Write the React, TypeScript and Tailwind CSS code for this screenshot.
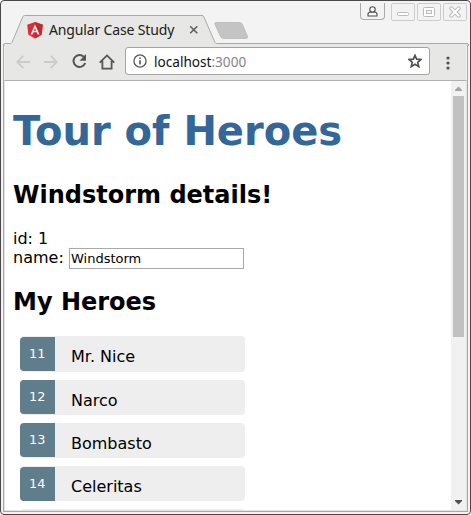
import React from 'react';

const heroes = [
  { id: 11, name: 'Mr. Nice' },
  { id: 12, name: 'Narco' },
  { id: 13, name: 'Bombasto' },
  { id: 14, name: 'Celeritas' },
];

function AngularLogo() {
  return (
    <svg width="16" height="17" viewBox="0 0 16 17" className="shrink-0">
      <path d="M8 0 L15.8 2.8 L14.6 12.8 L8 16.6 L1.4 12.8 L0.2 2.8 Z" fill="#dd2c35" />
      <path d="M8 0 L15.8 2.8 L14.6 12.8 L8 16.6 Z" fill="#bd2a33" />
      <path d="M8 2.6 L3.5 12.5 H5.4 L6.3 10.3 H9.7 L10.6 12.5 H12.5 Z M8 6 L9.1 8.8 H6.9 Z" fill="#fff" fillRule="evenodd" />
    </svg>
  );
}

function WindowButtons() {
  return (
    <div className="absolute right-[3px] top-[2px] flex items-start">
      <div className="mr-[6px] flex h-[17px] w-[25px] justify-center rounded-b-[4px] border border-t-0 border-[#aaa] bg-[#f3f3f3] pt-[3px]">
        <svg width="11" height="11" viewBox="0 0 11 11" fill="#f8f8f8" stroke="#4c4c4c" strokeWidth="1.1">
          <path d="M1 10 V8 Q1 6.2 4 6 H7 Q10 6.2 10 8 V10 Z" />
          <circle cx="5.5" cy="3.4" r="2.7" />
        </svg>
      </div>
      <div className="flex gap-[2px]">
        <div className="flex h-[18px] w-6 items-center justify-center rounded-[2px] border border-[#ccc]">
          <svg width="12" height="12" fill="#fff" stroke="#bbb">
            <rect x=".5" y="6.5" width="11" height="3" rx="1" />
          </svg>
        </div>
        <div className="flex h-[18px] w-6 items-center justify-center rounded-[2px] border border-[#ccc]">
          <svg width="12" height="12" fill="#fff" stroke="#bbb">
            <rect x=".5" y="1.5" width="11" height="9" rx="1" />
            <rect x="3.5" y="4.5" width="5" height="3" fill="#f3f3f3" />
          </svg>
        </div>
        <div className="flex h-[18px] w-6 items-center justify-center rounded-[2px] border border-[#ccc]">
          <svg width="12" height="12" strokeLinecap="round">
            <path d="M2.3 2.3 L9.7 9.7 M9.7 2.3 L2.3 9.7" stroke="#b5b5b5" strokeWidth="4" />
            <path d="M2.3 2.3 L9.7 9.7 M9.7 2.3 L2.3 9.7" stroke="#fff" strokeWidth="2" />
          </svg>
        </div>
      </div>
    </div>
  );
}

function TabStrip() {
  return (
    <div className="relative h-[43px] shrink-0">
      <svg className="absolute left-[2px] top-[14px]" width="466" height="31" viewBox="0 0 466 31">
        <path d="M0.5 31 V30 Q0.5 28.5 2 28.5 H7.5 Q8.5 28.5 9 27.5 L19.8 1.8 Q20.3 .5 21.5 .5 H199 Q200.3 .5 200.8 1.8 L212 27.5 Q212.5 28.5 213.5 28.5 H464 Q465.5 28.5 465.5 30 V31 Z" fill="#e7e7e5" stroke="#a9a9a9" />
        <path d="M213 7.5 H236.5 Q238.5 7.5 239.5 9.5 L244.4 21 Q245.2 23.5 243 23.5 H220.5 Q218.5 23.5 217.5 21.5 L212 9.5 Q211.2 7.5 213 7.5 Z" fill="#c4c4c4" stroke="#b4b4b4" strokeWidth=".7" />
      </svg>
      <div className="relative flex h-full items-start pl-[26px] pt-[19px] font-['Noto_Sans',sans-serif]">
        <div className="pt-[2px]"><AngularLogo /></div>
        <span className="ml-[6px] w-[126px] whitespace-nowrap text-[14px] leading-5 tracking-[-0.15px] text-[#202020]">Angular Case Study</span>
        <svg className="ml-[14px] mt-[5px]" width="10" height="10" stroke="#606060" strokeWidth="1.6">
          <path d="M1.2 1.2 L8.3 8.3 M8.3 1.2 L1.2 8.3" />
        </svg>
      </div>
      <WindowButtons />
    </div>
  );
}

function Toolbar() {
  return (
    <div className="relative mx-[3px] flex h-9 shrink-0 items-start bg-[#e7e7e5] pl-[10px] pt-[3px]">
      <div className="flex h-7 w-[110px] items-center pl-px pt-px">
        <svg width="14" height="14" fill="none" stroke="#cbcbcb" strokeWidth="1.8">
          <path d="M14 7 H1.5 M7.3 .8 L1.2 7 L7.3 13.2" />
        </svg>
        <svg className="ml-[14px]" width="14" height="14" fill="none" stroke="#cbcbcb" strokeWidth="1.8">
          <path d="M0 7 H12.5 M6.7 .8 L12.8 7 L6.7 13.2" />
        </svg>
        <svg className="ml-[14px]" width="15" height="15" fill="none" stroke="#555" strokeWidth="2">
          <path d="M12.2 3.2 A6 6 0 1 0 13.2 9" />
          <path d="M14 0 V6.7 H7.5 Z" fill="#555" stroke="none" />
        </svg>
        <svg className="ml-[12px]" width="16" height="16" fill="none" stroke="#555" strokeWidth="1.8">
          <path d="M.7 8.7 L8 1.4 L15.3 8.7 M3.4 7 V14.6 H12.6 V7" />
        </svg>
      </div>
      <div className="flex h-7 w-[305px] items-center rounded-[3px] border border-[#a3a3a3] bg-white pl-[7px] pr-[7px] font-['Noto_Sans',sans-serif] text-[13.6px] leading-5">
        <svg width="14" height="14" fill="none" stroke="#555" strokeWidth="1.3">
          <circle cx="7" cy="7" r="6.1" />
          <path d="M7 6.2 V10.5 M7 3.4 V5" strokeWidth="1.6" />
        </svg>
        <span className="ml-[7px] flex-1 whitespace-nowrap pt-[2px] text-[#111]">localhost<span className="text-[#858585]">:3000</span></span>
        <svg width="14" height="14" viewBox="0.5 0.5 13 13" fill="none" stroke="#505050" strokeWidth="1.5">
          <path d="M7 1.7 L8.5 5.3 L12.6 5.6 L9.5 8.2 L10.5 12.2 L7 10 L3.5 12.2 L4.5 8.2 L1.4 5.6 L5.5 5.3 Z" />
        </svg>
      </div>
      <svg className="ml-[16px] mt-[9px]" width="4" height="14" fill="#505050">
        <circle cx="2" cy="2" r="1.6" />
        <circle cx="2" cy="7" r="1.6" />
        <circle cx="2" cy="12" r="1.6" />
      </svg>
    </div>
  );
}

function Page() {
  return (
    <main className="min-w-0 flex-1 overflow-hidden pl-2 pt-[27px] text-base leading-[19px] text-black">
      <h1 className="text-[40px] font-bold leading-[46px] text-[#336699]">Tour of Heroes</h1>
      <h2 className="mt-[27px] text-2xl font-bold leading-7">Windstorm details!</h2>
      <div className="mt-5">id: 1</div>
      <div className="flex h-[21px] items-start">
        <label className="w-14">name:</label>
        <input defaultValue="Windstorm" className="h-[21px] w-[175px] border border-[#a9a9a9] bg-white px-px text-[13px] outline-none" />
      </div>
      <h2 className="mt-[19px] text-2xl font-bold leading-7">My Heroes</h2>
      <ul className="ml-[7px] mt-[20.4px] flex w-[225px] flex-col gap-2">
        {heroes.map((hero) => (
          <li key={hero.id} className="flex h-[35.2px] shrink-0 items-start rounded-[4px] bg-[#eee]">
            <span className="mt-[0.6px] h-[34px] w-[35px] rounded-l-[4px] bg-[#607d8b] pl-[9px] pt-[7px] text-[12.8px] leading-[20px] text-white">{hero.id}</span>
            <span className="ml-4 pt-[11px]">{hero.name}</span>
          </li>
        ))}
        <li className="h-[35.2px] shrink-0 rounded-[4px] bg-[#eee]" />
      </ul>
    </main>
  );
}

function Scrollbar() {
  return (
    <div className="flex w-[15px] shrink-0 flex-col items-center bg-[#f1f1f1]">
      <svg className="shrink-0" width="15" height="15"><path d="M4 10 V9 L7.5 5.5 L11 9 V10 Z" fill="#a3a3a3" /></svg>
      <div className="h-[241px] w-[11px] bg-[#c1c1c1]" />
      <svg className="mt-auto shrink-0" width="15" height="15"><path d="M4 5 V6 L7.5 9.5 L11 6 V5 Z" fill="#505050" /></svg>
    </div>
  );
}

export default function App() {
  return (
    <div className="h-[515px] w-[471px] bg-white font-['DejaVu_Sans',sans-serif]">
      <div className="flex h-full w-full flex-col overflow-hidden rounded-[4px] border border-[#4a484a] bg-[#f3f3f3]">
        <TabStrip />
        <div className="mx-[2px] mb-[2px] flex min-h-0 flex-1 flex-col border-x border-b border-[#a9a9a9]">
          <div className="-mx-[2px] flex"><div className="flex-1"><Toolbar /></div></div>
          <div className="flex min-h-0 flex-1 border-x border-b border-t border-[#e3e3e3] border-t-[#b0b0b0] bg-white">
            <Page />
            <Scrollbar />
          </div>
        </div>
      </div>
    </div>
  );
}
